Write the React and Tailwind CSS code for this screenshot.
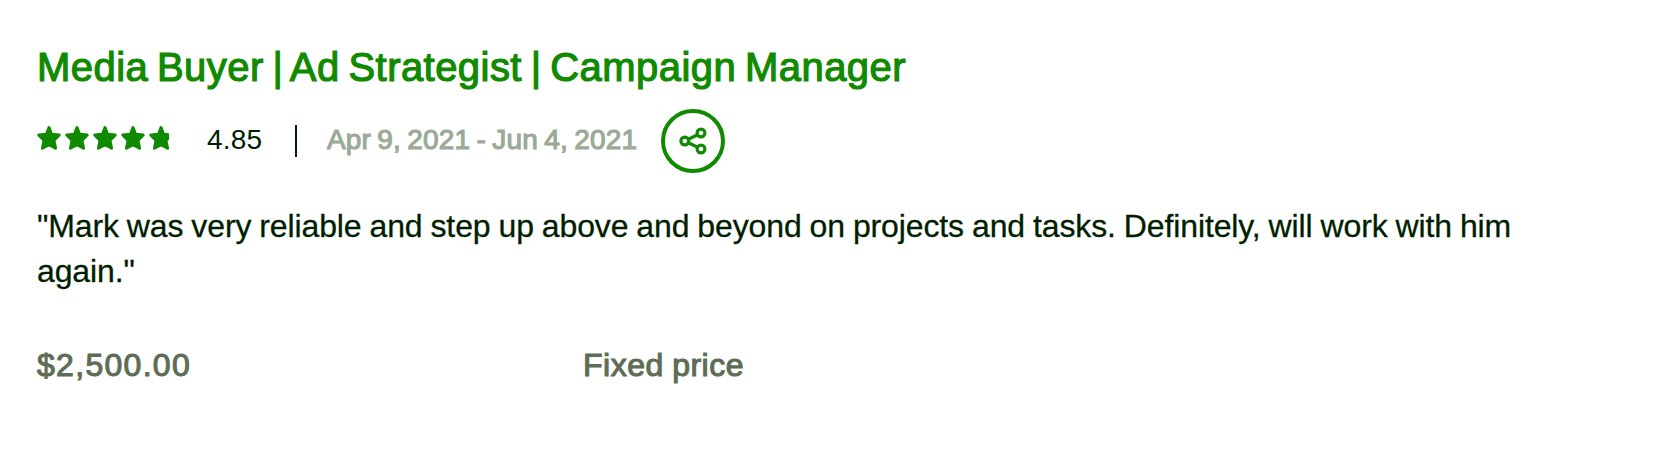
import React from 'react';

const STAR_PATH =
  'M12 1.6 14.6 8.2 22.2 9 16.9 14.4 18.6 22.2 12 18.7 5.4 22.2 7.1 14.4 1.8 9 9.4 8.2Z';

function StarRow({ className }) {
  return (
    <div className={`flex gap-1 w-[136px] ${className}`}>
      {[0, 1, 2, 3, 4].map((i) => (
        <svg
          key={i}
          viewBox="0 0 24 24"
          className="w-6 h-6 shrink-0"
          fill="currentColor"
          stroke="currentColor"
          strokeWidth="3"
          strokeLinejoin="round"
        >
          <path d={STAR_PATH} />
        </svg>
      ))}
    </div>
  );
}

function Rating({ value }) {
  return (
    <div className="relative w-[136px] h-6 -mt-1.5">
      <StarRow className="text-[#f7f8f7]" />
      <div className="absolute inset-0 overflow-hidden" style={{ width: `${(value / 5) * 100}%` }}>
        <StarRow className="text-[#108a00]" />
      </div>
    </div>
  );
}

function ShareButton() {
  return (
    <button className="w-16 h-16 ml-[26px] rounded-full border-4 border-[#108a00] text-[#108a00] flex items-center justify-center">
      <svg viewBox="0 0 28 28" className="w-7 h-7" fill="none" stroke="currentColor" strokeWidth="3.2">
        <circle cx="5.8" cy="14" r="3.9" />
        <circle cx="22" cy="6" r="3.9" />
        <circle cx="22" cy="22" r="3.9" />
        <path d="M9.4 12.3 18.6 7.7M9.4 15.7l9.2 4.6" />
      </svg>
    </button>
  );
}

export default function App() {
  return (
    <div className="w-[1654px] h-[452px] bg-white pl-[37px] pt-[43px] text-[#001e00] font-['Liberation_Sans',Arial,sans-serif]">
      <h2 className="text-[40px] leading-[48px] tracking-[0.45px] [word-spacing:-2.8px] whitespace-nowrap text-[#108a00] [-webkit-text-stroke:1.2px]">
        Media Buyer | Ad Strategist | Campaign Manager
      </h2>

      <div className="flex items-center h-16 mt-[18px] text-[28px] leading-8 whitespace-nowrap">
        <Rating value={4.85} />
        <span className="ml-[34px] -mt-0.5 w-[56px] tracking-[0.2px]">4.85</span>
        <span className="ml-8 w-0.5 h-8 bg-[#001e00]" />
        <span className="ml-[30px] -mt-0.5 w-[308px] tracking-[0.15px] [word-spacing:-1.6px] text-[#9aaa97] [-webkit-text-stroke:1.1px]">
          Apr 9, 2021 - Jun 4, 2021
        </span>
        <ShareButton />
      </div>

      <p className="mt-[31px] w-[1540px] text-[32px] leading-[45px] tracking-[-0.12px] [word-spacing:-0.8px] [-webkit-text-stroke:0.3px]">
        "Mark was very reliable and step up above and beyond on projects and tasks. Definitely, will work with him
        again."
      </p>

      <div className="flex mt-[49px] text-[32px] leading-[45px] text-[#5e6d55] [-webkit-text-stroke:1.1px]">
        <span className="w-[546px] tracking-[1.3px]">$2,500.00</span>
        <span className="tracking-[0.5px] [word-spacing:-1px]">Fixed price</span>
      </div>
    </div>
  );
}
